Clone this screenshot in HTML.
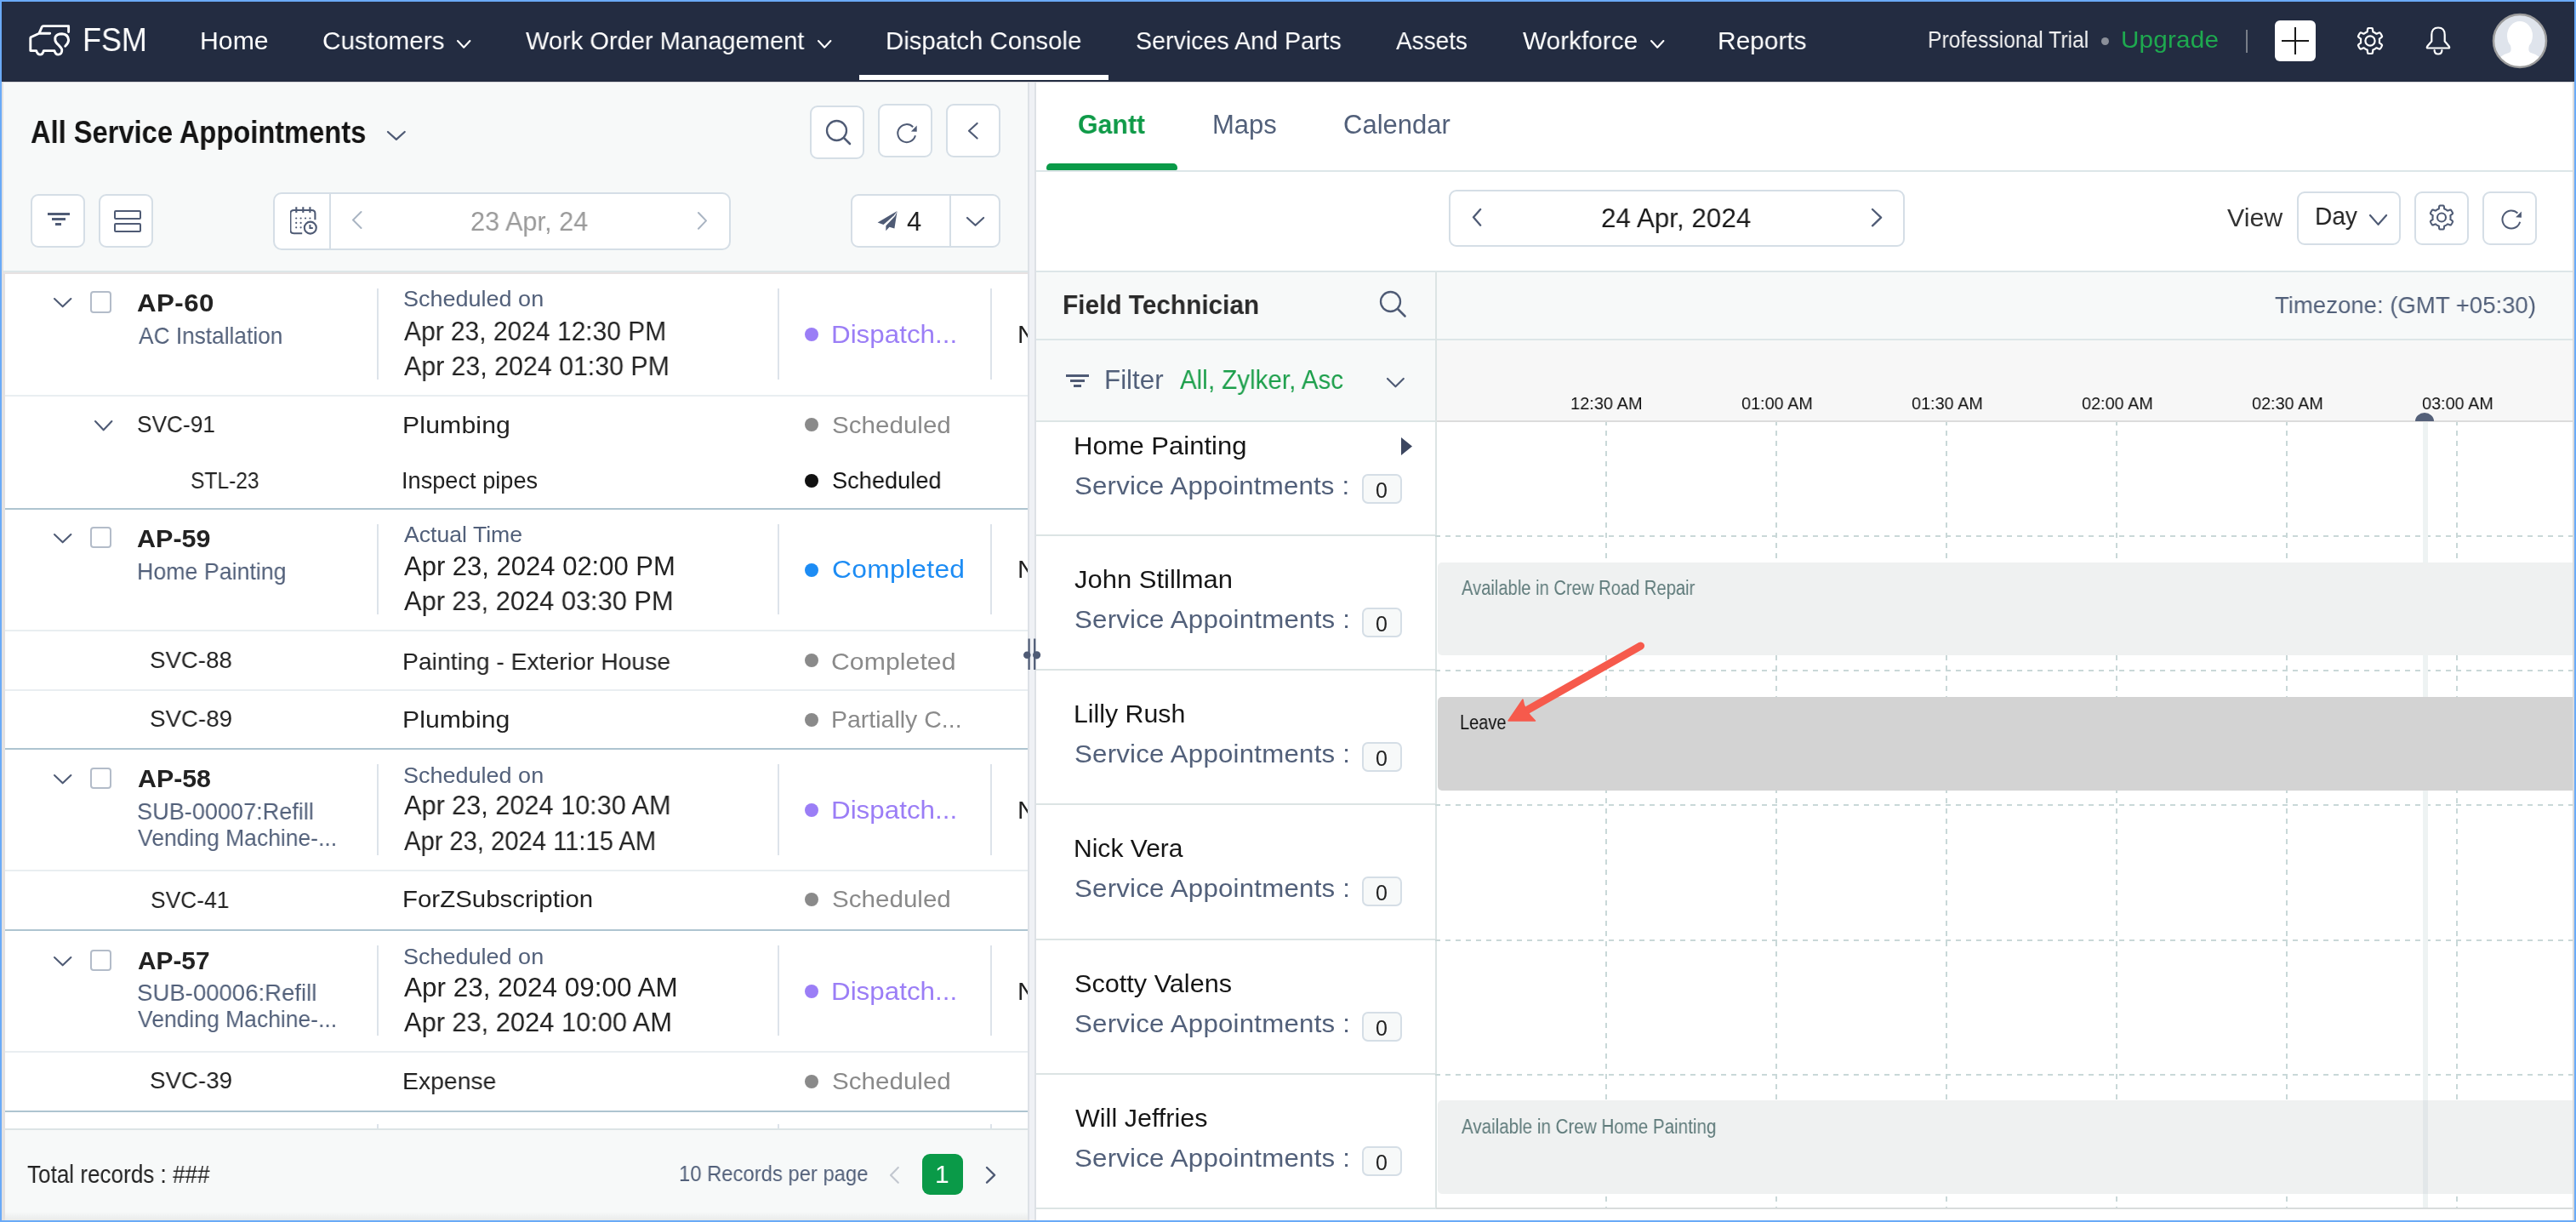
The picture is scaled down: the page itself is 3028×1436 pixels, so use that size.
<!DOCTYPE html><html><head><meta charset="utf-8"><title>FSM Dispatch Console</title><style>
*{margin:0;padding:0}
html,body{width:3028px;height:1436px;overflow:hidden;background:#6aaaf7;font-family:"Liberation Sans",sans-serif}
.a{position:absolute}
.t{position:absolute;white-space:nowrap;line-height:1;will-change:transform}
</style></head><body><div class="a" style="left:2px;top:2px;width:3024px;height:1432px;background:#ffffff;"></div>
<div class="a" style="left:2px;top:2px;width:3024px;height:94px;background:#232c41;"></div>
<div class="a" style="left:2px;top:96px;width:3024px;height:1px;background:#d9d9dc;"></div>
<div class="a" style="left:2px;top:97px;width:1206px;height:1337px;background:#f7f9f9;"></div>
<div class="a" style="left:2px;top:97px;width:2px;height:221px;background:#e2e1e1;"></div>
<div class="a" style="left:2px;top:318px;width:4px;height:1116px;background:#e3e1e1;"></div>
<div class="a" style="left:4px;top:318px;width:1204px;height:2px;background:#dde6e8;"></div>
<div class="a" style="left:4px;top:320px;width:1204px;height:2px;background:#e7e2e2;"></div>
<div class="a" style="left:6px;top:322px;width:1202px;height:1004px;background:#ffffff;"></div>
<div class="a" style="left:6px;top:464px;width:1202px;height:2px;background:#e9eef1;"></div>
<div class="a" style="left:6px;top:597px;width:1202px;height:2px;background:#aec4d0;"></div>
<div class="a" style="left:6px;top:740px;width:1202px;height:2px;background:#e9eef1;"></div>
<div class="a" style="left:6px;top:810px;width:1202px;height:2px;background:#e9eef1;"></div>
<div class="a" style="left:6px;top:879px;width:1202px;height:2px;background:#aec4d0;"></div>
<div class="a" style="left:6px;top:1022px;width:1202px;height:2px;background:#e9eef1;"></div>
<div class="a" style="left:6px;top:1092px;width:1202px;height:2px;background:#aec4d0;"></div>
<div class="a" style="left:6px;top:1235px;width:1202px;height:2px;background:#e9eef1;"></div>
<div class="a" style="left:6px;top:1305px;width:1202px;height:2px;background:#aec4d0;"></div>
<div class="a" style="left:6px;top:1326px;width:1202px;height:2px;background:#dce4e6;"></div>
<div class="a" style="left:6px;top:1424px;width:1202px;height:10px;background:linear-gradient(180deg,rgba(0,0,0,0),rgba(0,0,0,0.06))"></div>
<div class="a" style="left:1218px;top:1421px;width:1806px;height:13px;background:linear-gradient(180deg,rgba(0,0,0,0),rgba(0,0,0,0.05))"></div>
<div class="a" style="left:1208px;top:97px;width:10px;height:1337px;background:#eff1f5;"></div>
<div class="a" style="left:1208px;top:97px;width:2px;height:1337px;background:#dde1e6;"></div>
<div class="a" style="left:1216px;top:97px;width:2px;height:1337px;background:#dde1e6;"></div>
<div class="a" style="left:1218px;top:97px;width:1806px;height:1337px;background:#ffffff;"></div>
<div class="a" style="left:3024px;top:97px;width:2px;height:1337px;background:#dcdcdc;"></div>
<div class="a" style="left:1218px;top:200px;width:1806px;height:2px;background:#dde6e8;"></div>
<div class="a" style="left:1218px;top:318px;width:1806px;height:2px;background:#dde6e8;"></div>
<div class="a" style="left:1218px;top:320px;width:1806px;height:78px;background:#f7f9f9;"></div>
<div class="a" style="left:1218px;top:398px;width:1806px;height:2px;background:#dde6e8;"></div>
<div class="a" style="left:1218px;top:400px;width:470px;height:94px;background:#f7f9f9;"></div>
<div class="a" style="left:1689px;top:400px;width:1335px;height:94px;background:#f7f7f7;"></div>
<div class="a" style="left:1218px;top:494px;width:470px;height:2px;background:#dde5e5;"></div>
<div class="a" style="left:1688px;top:494px;width:1336px;height:2px;background:#dcdcdc;"></div>
<div class="a" style="left:1687px;top:320px;width:2px;height:1100px;background:#dce4e4;"></div>
<div class="a" style="left:1218px;top:628px;width:469px;height:2px;background:#dce4e4;"></div>
<div class="a" style="left:1218px;top:786px;width:469px;height:2px;background:#dce4e4;"></div>
<div class="a" style="left:1218px;top:944px;width:469px;height:2px;background:#dce4e4;"></div>
<div class="a" style="left:1218px;top:1103px;width:469px;height:2px;background:#dce4e4;"></div>
<div class="a" style="left:1218px;top:1261px;width:469px;height:2px;background:#dce4e4;"></div>
<div class="a" style="left:1218px;top:1419px;width:470px;height:2px;background:#dce4e4;"></div>
<div class="a" style="left:1688px;top:1419px;width:1336px;height:2px;background:#d8dcdc;"></div>
<div class="a" style="left:1687px;top:629px;width:1337px;height:2px;background:repeating-linear-gradient(90deg,#c9d8d8 0 6px,transparent 6px 12px)"></div>
<div class="a" style="left:1687px;top:787px;width:1337px;height:2px;background:repeating-linear-gradient(90deg,#c9d8d8 0 6px,transparent 6px 12px)"></div>
<div class="a" style="left:1687px;top:945px;width:1337px;height:2px;background:repeating-linear-gradient(90deg,#c9d8d8 0 6px,transparent 6px 12px)"></div>
<div class="a" style="left:1687px;top:1104px;width:1337px;height:2px;background:repeating-linear-gradient(90deg,#c9d8d8 0 6px,transparent 6px 12px)"></div>
<div class="a" style="left:1687px;top:1262px;width:1337px;height:2px;background:repeating-linear-gradient(90deg,#c9d8d8 0 6px,transparent 6px 12px)"></div>
<div class="a" style="left:1887px;top:496px;width:2px;height:923px;background:repeating-linear-gradient(180deg,#c9d8d8 0 4px,transparent 4px 10px,#c9d8d8 10px 12px)"></div>
<div class="a" style="left:2087px;top:496px;width:2px;height:923px;background:repeating-linear-gradient(180deg,#c9d8d8 0 4px,transparent 4px 10px,#c9d8d8 10px 12px)"></div>
<div class="a" style="left:2287px;top:496px;width:2px;height:923px;background:repeating-linear-gradient(180deg,#c9d8d8 0 4px,transparent 4px 10px,#c9d8d8 10px 12px)"></div>
<div class="a" style="left:2487px;top:496px;width:2px;height:923px;background:repeating-linear-gradient(180deg,#c9d8d8 0 4px,transparent 4px 10px,#c9d8d8 10px 12px)"></div>
<div class="a" style="left:2687px;top:496px;width:2px;height:923px;background:repeating-linear-gradient(180deg,#c9d8d8 0 4px,transparent 4px 10px,#c9d8d8 10px 12px)"></div>
<div class="a" style="left:2887px;top:496px;width:2px;height:923px;background:repeating-linear-gradient(180deg,#c9d8d8 0 4px,transparent 4px 10px,#c9d8d8 10px 12px)"></div>
<div class="a" style="left:2848px;top:496px;width:6px;height:923px;background:#eef3f3;"></div>
<div class="a" style="left:1690px;top:661px;width:1334px;height:109px;background:#eff1f1;border-radius:5px 0 0 5px;"></div>
<div class="a" style="left:1690px;top:819px;width:1334px;height:110px;background:#d3d3d3;border-radius:5px 0 0 5px;"></div>
<div class="a" style="left:1690px;top:1293px;width:1334px;height:110px;background:#eff1f1;border-radius:5px 0 0 5px;"></div>
<div class="a" style="left:2848px;top:1293px;width:6px;height:110px;background:#e2e7e9;"></div>
<svg class="a" style="left:2839px;top:485px;" width="22" height="10" viewBox="0 0 22 10"><path d="M0 10 A11 10 0 0 1 22 10 Z" fill="#546079"/></svg>
<svg class="a" style="left:28px;top:22px;" width="62" height="50" viewBox="0 0 62 50"><path d="M52.6 15.5 L52.6 8.6 L23 8.6 Q21.7 8.6 21.2 9.8 L18 17.2 L30.7 17.2 M18 17.2 L8.2 21.8 Q7.8 22.2 7.8 23 L7.8 37.6 L14.7 37.6 Q16 42.1 19.2 42.1 Q22.3 42.1 23.3 37.6 L36 37.6 Q37.2 42.1 40.3 42.1 Q45 42.1 44.8 36.4 Q44.6 34.4 38.5 28.6 Q36 25.4 37 21.5 Q38.6 18 44.9 17.8 Q52 18.2 52.6 25 Q52.6 28.6 48.7 32.3" fill="none" stroke="#fff" stroke-width="2.9" stroke-linecap="round" stroke-linejoin="round"/></svg>
<svg class="a" style="left:533.8px;top:43.54px;" width="22.4" height="15.72" viewBox="0 0 22.4 15.72"><path d="M4 4 L11.2 11.72 L18.4 4" fill="none" stroke="#ffffff" stroke-width="2.1" stroke-linecap="round" stroke-linejoin="round"/></svg>
<svg class="a" style="left:958.3px;top:43.54px;" width="22.4" height="15.72" viewBox="0 0 22.4 15.72"><path d="M4 4 L11.2 11.72 L18.4 4" fill="none" stroke="#ffffff" stroke-width="2.1" stroke-linecap="round" stroke-linejoin="round"/></svg>
<svg class="a" style="left:1936.8px;top:43.54px;" width="22.4" height="15.72" viewBox="0 0 22.4 15.72"><path d="M4 4 L11.2 11.72 L18.4 4" fill="none" stroke="#ffffff" stroke-width="2.1" stroke-linecap="round" stroke-linejoin="round"/></svg>
<div class="a" style="left:1010px;top:88px;width:293px;height:6px;background:#ffffff;"></div>
<div class="a" style="left:2470px;top:44px;width:9px;height:9px;border-radius:50%;background:#8a8f99"></div>
<div class="a" style="left:2640px;top:35px;width:2px;height:27px;background:#777d88;"></div>
<div class="a" style="left:2674px;top:24px;width:48px;height:48px;background:#ffffff;border-radius:6px;"></div>
<div class="a" style="left:2682px;top:47px;width:32px;height:2px;background:#1a1a1a;"></div>
<div class="a" style="left:2697px;top:32px;width:2px;height:32px;background:#1a1a1a;"></div>
<svg class="a" style="left:2766px;top:28px;" width="40" height="40" viewBox="0 0 40 40"><path d="M31.00 20.00 L30.99 20.48 L30.96 20.96 L30.91 21.44 L30.83 21.91 L30.90 22.42 L31.99 23.21 L33.37 24.22 L34.07 25.12 L33.86 25.74 L33.59 26.34 L33.31 26.93 L32.99 27.50 L32.65 28.06 L32.29 28.60 L31.90 29.13 L31.47 29.63 L30.34 29.47 L28.77 28.77 L27.54 28.23 L27.07 28.43 L26.70 28.73 L26.31 29.01 L25.91 29.28 L25.50 29.53 L25.08 29.76 L24.65 29.97 L24.21 30.16 L23.76 30.34 L23.36 30.65 L23.21 31.99 L23.03 33.69 L22.60 34.75 L21.96 34.87 L21.31 34.94 L20.65 34.99 L20.00 35.00 L19.35 34.99 L18.69 34.94 L18.04 34.87 L17.40 34.75 L16.97 33.69 L16.79 31.99 L16.64 30.65 L16.24 30.34 L15.79 30.16 L15.35 29.97 L14.92 29.76 L14.50 29.53 L14.09 29.28 L13.69 29.01 L13.30 28.73 L12.93 28.43 L12.46 28.23 L11.23 28.77 L9.66 29.47 L8.53 29.63 L8.10 29.13 L7.71 28.60 L7.35 28.06 L7.01 27.50 L6.69 26.93 L6.41 26.34 L6.14 25.74 L5.93 25.12 L6.63 24.22 L8.01 23.21 L9.10 22.42 L9.17 21.91 L9.09 21.44 L9.04 20.96 L9.01 20.48 L9.00 20.00 L9.01 19.52 L9.04 19.04 L9.09 18.56 L9.17 18.09 L9.10 17.58 L8.01 16.79 L6.63 15.78 L5.93 14.88 L6.14 14.26 L6.41 13.66 L6.69 13.07 L7.01 12.50 L7.35 11.94 L7.71 11.40 L8.10 10.87 L8.53 10.37 L9.66 10.53 L11.23 11.23 L12.46 11.77 L12.93 11.57 L13.30 11.27 L13.69 10.99 L14.09 10.72 L14.50 10.47 L14.92 10.24 L15.35 10.03 L15.79 9.84 L16.24 9.66 L16.64 9.35 L16.79 8.01 L16.97 6.31 L17.40 5.25 L18.04 5.13 L18.69 5.06 L19.35 5.01 L20.00 5.00 L20.65 5.01 L21.31 5.06 L21.96 5.13 L22.60 5.25 L23.03 6.31 L23.21 8.01 L23.36 9.35 L23.76 9.66 L24.21 9.84 L24.65 10.03 L25.08 10.24 L25.50 10.47 L25.91 10.72 L26.31 10.99 L26.70 11.27 L27.07 11.57 L27.54 11.77 L28.77 11.23 L30.34 10.53 L31.47 10.37 L31.90 10.87 L32.29 11.40 L32.65 11.94 L32.99 12.50 L33.31 13.07 L33.59 13.66 L33.86 14.26 L34.07 14.88 L33.37 15.78 L31.99 16.79 L30.90 17.58 L30.83 18.09 L30.91 18.56 L30.96 19.04 L30.99 19.52 Z" fill="none" stroke="#fff" stroke-width="2.2" stroke-linejoin="round"/><circle cx="20" cy="20" r="5.6" fill="none" stroke="#fff" stroke-width="2.2"/></svg>
<svg class="a" style="left:2848px;top:28px;" width="36" height="40" viewBox="0 0 36 40"><path d="M6 28.5 Q4 28.5 5.2 26.5 L10.3 20.5 L10.3 13 Q10.3 4.5 18 4.5 Q25.7 4.5 25.7 13 L25.7 20.5 L30.8 26.5 Q32 28.5 30 28.5 Z" fill="none" stroke="#fff" stroke-width="2.2" stroke-linejoin="round"/><path d="M13.6 31 Q13.6 35.5 18 35.5 Q22.4 35.5 22.4 31" fill="none" stroke="#fff" stroke-width="2.2" stroke-linecap="round"/></svg>
<svg class="a" style="left:2929px;top:15px;" width="66" height="66" viewBox="0 0 66 66"><defs><clipPath id="avc"><circle cx="33" cy="33" r="31"/></clipPath></defs><circle cx="33" cy="33" r="31" fill="#dfe4ec"/><g clip-path="url(#avc)"><ellipse cx="33" cy="27" rx="15" ry="17" fill="#fff"/><path d="M22 38 Q24 46 20 47 Q8 50 6 60 L6 70 L60 70 L60 60 Q58 50 46 47 Q42 46 44 38 Z" fill="#fff"/></g><circle cx="33" cy="33" r="31" fill="none" stroke="#9c9c9c" stroke-width="2.5"/></svg>
<svg class="a" style="left:452.15px;top:150.57px;" width="27.7" height="16.86" viewBox="0 0 27.7 16.86"><path d="M4 4 L13.85 12.86 L23.7 4" fill="none" stroke="#4f5b75" stroke-width="2.3" stroke-linecap="round" stroke-linejoin="round"/></svg>
<div class="a" style="left:952px;top:124px;width:64px;height:63px;background:#fff;border:2px solid #d5dee6;box-sizing:border-box;border-radius:9px;"></div>
<div class="a" style="left:1032px;top:122px;width:64px;height:63px;background:#fff;border:2px solid #d5dee6;box-sizing:border-box;border-radius:9px;"></div>
<div class="a" style="left:1112px;top:122px;width:64px;height:63px;background:#fff;border:2px solid #d5dee6;box-sizing:border-box;border-radius:9px;"></div>
<svg class="a" style="left:969.5px;top:139.5px;" width="36" height="36" viewBox="0 0 36 36"><circle cx="13.5" cy="13.5" r="11.5" fill="none" stroke="#4f5b75" stroke-width="2.3"/><path d="M21.8 21.8 L29 29" stroke="#4f5b75" stroke-width="2.6" stroke-linecap="round"/></svg>
<svg class="a" style="left:1053px;top:140.5px;" width="30" height="30" viewBox="0 0 30 30"><path d="M22.94 18.32 A10.5 10.5 0 1 1 20.22 8.18" fill="none" stroke="#4f5b75" stroke-width="2"/><path d="M24.7 6.6 L24.7 13.8 L17.9 13.4 Z" fill="#4f5b75"/></svg>
<svg class="a" style="left:1135.3px;top:141.0px;" width="17.600000000000136" height="25.5" viewBox="0 0 17.600000000000136 25.5"><path d="M13.600000000000136 4 L4 12.75 L13.600000000000136 21.5" fill="none" stroke="#4f5b75" stroke-width="2.2" stroke-linecap="round" stroke-linejoin="round"/></svg>
<div class="a" style="left:36px;top:228px;width:64px;height:63px;background:#fff;border:2px solid #d5dee6;box-sizing:border-box;border-radius:9px;"></div>
<div class="a" style="left:116px;top:228px;width:64px;height:63px;background:#fff;border:2px solid #d5dee6;box-sizing:border-box;border-radius:9px;"></div>
<div class="a" style="left:56px;top:250px;width:26px;height:3px;background:#4f5b75;"></div>
<div class="a" style="left:61px;top:256px;width:16px;height:3px;background:#4f5b75;"></div>
<div class="a" style="left:65px;top:262px;width:7px;height:3px;background:#4f5b75;"></div>
<div class="a" style="left:134px;top:247px;width:32px;height:11px;border:2.2px solid #4f5b75;border-radius:2px;box-sizing:border-box"></div>
<div class="a" style="left:134px;top:262px;width:32px;height:11px;border:2.2px solid #4f5b75;border-radius:2px;box-sizing:border-box"></div>
<div class="a" style="left:321px;top:226px;width:538px;height:68px;background:#fff;border:2px solid #d5dee6;box-sizing:border-box;border-radius:10px;"></div>
<div class="a" style="left:387px;top:228px;width:2px;height:64px;background:#d5dee6;"></div>
<svg class="a" style="left:341px;top:241px;" width="34" height="38" viewBox="0 0 34 38"><path d="M14.2 33.3 L4.5 33.3 Q0.4 33.3 0.4 29.2 L0.4 9.8 Q0.4 6 4.5 6 L25.3 6 Q29.4 6 29.4 9.8 L29.4 17.3" fill="none" stroke="#4f5b75" stroke-width="2.1"/><path d="M7.3 2.2 L7.3 8.9" stroke="#4f5b75" stroke-width="2.1"/><path d="M15.3 2.2 L15.3 8.9" stroke="#4f5b75" stroke-width="2.1"/><path d="M23.4 2.2 L23.4 8.9" stroke="#4f5b75" stroke-width="2.1"/><circle cx="7.2" cy="15.5" r="1.1" fill="#4f5b75"/><circle cx="12.6" cy="15.5" r="1.1" fill="#4f5b75"/><circle cx="18" cy="15.5" r="1.1" fill="#4f5b75"/><circle cx="23.4" cy="15.5" r="1.1" fill="#4f5b75"/><circle cx="7.2" cy="20.9" r="1.1" fill="#4f5b75"/><circle cx="12.6" cy="20.9" r="1.1" fill="#4f5b75"/><circle cx="7.2" cy="26.3" r="1.1" fill="#4f5b75"/><circle cx="12.6" cy="26.3" r="1.1" fill="#4f5b75"/><circle cx="23.8" cy="26.6" r="7" fill="#fff" stroke="#4f5b75" stroke-width="2.1"/><path d="M23.4 23 L23.4 27 L26.8 27" fill="none" stroke="#4f5b75" stroke-width="2"/></svg>
<svg class="a" style="left:411.0px;top:245.0px;" width="17.5" height="27.0" viewBox="0 0 17.5 27.0"><path d="M13.5 4 L4 13.5 L13.5 23.0" fill="none" stroke="#a9b4c2" stroke-width="2" stroke-linecap="round" stroke-linejoin="round"/></svg>
<svg class="a" style="left:817.0px;top:245.5px;" width="17.0" height="26.80000000000001" viewBox="0 0 17.0 26.80000000000001"><path d="M4 4 L13.0 13.400000000000006 L4 22.80000000000001" fill="none" stroke="#a9b4c2" stroke-width="2" stroke-linecap="round" stroke-linejoin="round"/></svg>
<div class="a" style="left:1000px;top:228px;width:176px;height:63px;background:#fff;border:2px solid #d5dee6;box-sizing:border-box;border-radius:9px;"></div>
<div class="a" style="left:1116px;top:230px;width:2px;height:59px;background:#d5dee6;"></div>
<svg class="a" style="left:1030px;top:247px;" width="26" height="26" viewBox="0 0 26 26"><path d="M24.6 1 L1.6 14.4 L8.5 16.9 L20.8 6.3 Z" fill="#4f5b75"/><path d="M24.6 1.3 L21.4 21.6 L15.5 19.8 L11.3 24.2 L11.4 18.2 L22.2 6.8 Z" fill="#4f5b75"/></svg>
<svg class="a" style="left:1132.75px;top:252.13px;" width="27.1" height="16.740000000000002" viewBox="0 0 27.1 16.740000000000002"><path d="M4 4 L13.55 12.74 L23.1 4" fill="none" stroke="#4f5b75" stroke-width="2.2" stroke-linecap="round" stroke-linejoin="round"/></svg>
<svg class="a" style="left:59.599999999999994px;top:347.14px;" width="27.4" height="17.32" viewBox="0 0 27.4 17.32"><path d="M4 4 L13.7 13.32 L23.4 4" fill="none" stroke="#4f5b75" stroke-width="2.1" stroke-linecap="round" stroke-linejoin="round"/></svg>
<div class="a" style="left:106px;top:342.2px;width:25px;height:25.6px;border:2px solid #b3bcc9;border-radius:4px;box-sizing:border-box;background:#fff"></div>
<div class="a" style="left:443px;top:338.7px;width:2px;height:107.60000000000002px;background:#dde3ea;"></div>
<div class="a" style="left:914px;top:338.7px;width:2px;height:107.60000000000002px;background:#dde3ea;"></div>
<div class="a" style="left:1164px;top:338.7px;width:2px;height:107.60000000000002px;background:#dde3ea;"></div>
<div class="a" style="left:946px;top:385.0px;width:16px;height:16px;border-radius:50%;background:#9b7ef6"></div>
<div class="a" style="left:1190px;top:373.0px;width:18px;height:40px;overflow:hidden"><div class="t" style="left:5.5px;top:4.61px;font-size:30px;color:#222">N</div></div>
<svg class="a" style="left:59.599999999999994px;top:623.64px;" width="27.4" height="17.32" viewBox="0 0 27.4 17.32"><path d="M4 4 L13.7 13.32 L23.4 4" fill="none" stroke="#4f5b75" stroke-width="2.1" stroke-linecap="round" stroke-linejoin="round"/></svg>
<div class="a" style="left:106px;top:618.7px;width:25px;height:25.6px;border:2px solid #b3bcc9;border-radius:4px;box-sizing:border-box;background:#fff"></div>
<div class="a" style="left:443px;top:615.7px;width:2px;height:106.79999999999995px;background:#dde3ea;"></div>
<div class="a" style="left:914px;top:615.7px;width:2px;height:106.79999999999995px;background:#dde3ea;"></div>
<div class="a" style="left:1164px;top:615.7px;width:2px;height:106.79999999999995px;background:#dde3ea;"></div>
<div class="a" style="left:946px;top:662.0px;width:16px;height:16px;border-radius:50%;background:#1d8cf4"></div>
<div class="a" style="left:1190px;top:649.5px;width:18px;height:40px;overflow:hidden"><div class="t" style="left:5.5px;top:4.61px;font-size:30px;color:#222">N</div></div>
<svg class="a" style="left:59.599999999999994px;top:906.64px;" width="27.4" height="17.32" viewBox="0 0 27.4 17.32"><path d="M4 4 L13.7 13.32 L23.4 4" fill="none" stroke="#4f5b75" stroke-width="2.1" stroke-linecap="round" stroke-linejoin="round"/></svg>
<div class="a" style="left:106px;top:901.7px;width:25px;height:25.6px;border:2px solid #b3bcc9;border-radius:4px;box-sizing:border-box;background:#fff"></div>
<div class="a" style="left:443px;top:898px;width:2px;height:107px;background:#dde3ea;"></div>
<div class="a" style="left:914px;top:898px;width:2px;height:107px;background:#dde3ea;"></div>
<div class="a" style="left:1164px;top:898px;width:2px;height:107px;background:#dde3ea;"></div>
<div class="a" style="left:946px;top:944.0px;width:16px;height:16px;border-radius:50%;background:#9b7ef6"></div>
<div class="a" style="left:1190px;top:932.5px;width:18px;height:40px;overflow:hidden"><div class="t" style="left:5.5px;top:4.61px;font-size:30px;color:#222">N</div></div>
<svg class="a" style="left:59.599999999999994px;top:1120.6399999999999px;" width="27.4" height="17.32" viewBox="0 0 27.4 17.32"><path d="M4 4 L13.7 13.32 L23.4 4" fill="none" stroke="#4f5b75" stroke-width="2.1" stroke-linecap="round" stroke-linejoin="round"/></svg>
<div class="a" style="left:106px;top:1115.7px;width:25px;height:25.6px;border:2px solid #b3bcc9;border-radius:4px;box-sizing:border-box;background:#fff"></div>
<div class="a" style="left:443px;top:1111px;width:2px;height:106px;background:#dde3ea;"></div>
<div class="a" style="left:914px;top:1111px;width:2px;height:106px;background:#dde3ea;"></div>
<div class="a" style="left:1164px;top:1111px;width:2px;height:106px;background:#dde3ea;"></div>
<div class="a" style="left:946px;top:1157.0px;width:16px;height:16px;border-radius:50%;background:#9b7ef6"></div>
<div class="a" style="left:1190px;top:1145.5px;width:18px;height:40px;overflow:hidden"><div class="t" style="left:5.5px;top:4.61px;font-size:30px;color:#222">N</div></div>
<svg class="a" style="left:107.5px;top:490.84px;" width="27.4" height="18.32" viewBox="0 0 27.4 18.32"><path d="M4 4 L13.7 14.32 L23.4 4" fill="none" stroke="#4f5b75" stroke-width="2.1" stroke-linecap="round" stroke-linejoin="round"/></svg>
<div class="a" style="left:946px;top:491.0px;width:16px;height:16px;border-radius:50%;background:#8a8a8a"></div>
<div class="a" style="left:946px;top:557.0px;width:16px;height:16px;border-radius:50%;background:#111"></div>
<div class="a" style="left:946px;top:768.0px;width:16px;height:16px;border-radius:50%;background:#8a8a8a"></div>
<div class="a" style="left:946px;top:837.5px;width:16px;height:16px;border-radius:50%;background:#8a8a8a"></div>
<div class="a" style="left:946px;top:1049.0px;width:16px;height:16px;border-radius:50%;background:#8a8a8a"></div>
<div class="a" style="left:946px;top:1262.5px;width:16px;height:16px;border-radius:50%;background:#8a8a8a"></div>
<div class="a" style="left:443px;top:1321px;width:2px;height:5px;background:#dde3ea;"></div>
<div class="a" style="left:914px;top:1321px;width:2px;height:5px;background:#dde3ea;"></div>
<div class="a" style="left:1164px;top:1321px;width:2px;height:5px;background:#dde3ea;"></div>
<svg class="a" style="left:1043.1px;top:1368.1px;" width="16.800000000000182" height="25.800000000000182" viewBox="0 0 16.800000000000182 25.800000000000182"><path d="M12.800000000000182 4 L4 12.900000000000091 L12.800000000000182 21.800000000000182" fill="none" stroke="#c3c8d0" stroke-width="2.2" stroke-linecap="round" stroke-linejoin="round"/></svg>
<div class="a" style="left:1084px;top:1356px;width:48px;height:48px;background:#0a9a48;border-radius:9px;"></div>
<div class="t" style="left:1099.25px;top:1364.61px;font-size:30px;color:#ffffff;">1</div>
<svg class="a" style="left:1156.2px;top:1368.2px;" width="17.09999999999991" height="25.59999999999991" viewBox="0 0 17.09999999999991 25.59999999999991"><path d="M4 4 L13.099999999999909 12.799999999999955 L4 21.59999999999991" fill="none" stroke="#4f5b75" stroke-width="2.4" stroke-linecap="round" stroke-linejoin="round"/></svg>
<svg class="a" style="left:1200px;top:748px;" width="26" height="42" viewBox="0 0 26 42"><path d="M9.6 2.5 L9.6 39 M16.2 2.5 L16.2 39" stroke="#4f5b75" stroke-width="2.2"/><circle cx="7.3" cy="21.8" r="4.3" fill="#4f5b75"/><circle cx="18.6" cy="21.8" r="4.6" fill="#4f5b75"/></svg>
<div class="a" style="left:1230px;top:192px;width:154px;height:8px;background:#0a9a48;border-radius:5px 5px 2px 2px"></div>
<div class="a" style="left:1703px;top:223px;width:536px;height:67px;background:#fff;border:2px solid #d5dee6;box-sizing:border-box;border-radius:9px;"></div>
<svg class="a" style="left:1728.15px;top:241.65px;" width="16.199999999999818" height="26.700000000000017" viewBox="0 0 16.199999999999818 26.700000000000017"><path d="M12.199999999999818 4 L4 13.350000000000009 L12.199999999999818 22.700000000000017" fill="none" stroke="#4f5b75" stroke-width="2.3" stroke-linecap="round" stroke-linejoin="round"/></svg>
<svg class="a" style="left:2197.15px;top:242.15px;" width="18.09999999999991" height="27.30000000000004" viewBox="0 0 18.09999999999991 27.30000000000004"><path d="M4 4 L14.099999999999909 13.65000000000002 L4 23.30000000000004" fill="none" stroke="#4f5b75" stroke-width="2.3" stroke-linecap="round" stroke-linejoin="round"/></svg>
<div class="a" style="left:2700px;top:225px;width:122px;height:63px;background:#fff;border:2px solid #d5dee6;box-sizing:border-box;border-radius:9px;"></div>
<svg class="a" style="left:2782.45px;top:249.08px;" width="27.1" height="18.84" viewBox="0 0 27.1 18.84"><path d="M4 4 L13.55 14.84 L23.1 4" fill="none" stroke="#4f5b75" stroke-width="2.2" stroke-linecap="round" stroke-linejoin="round"/></svg>
<div class="a" style="left:2838px;top:225px;width:64px;height:63px;background:#fff;border:2px solid #d5dee6;box-sizing:border-box;border-radius:9px;"></div>
<div class="a" style="left:2918px;top:225px;width:64px;height:63px;background:#fff;border:2px solid #d5dee6;box-sizing:border-box;border-radius:9px;"></div>
<svg class="a" style="left:2850px;top:236px;" width="40" height="40" viewBox="0 0 40 40"><path d="M30.50 19.50 L30.49 19.96 L30.46 20.42 L30.41 20.87 L30.34 21.32 L30.39 21.80 L31.33 22.54 L32.54 23.45 L33.14 24.28 L32.93 24.86 L32.69 25.42 L32.42 25.96 L32.12 26.50 L31.81 27.02 L31.47 27.53 L31.11 28.02 L30.71 28.49 L29.69 28.38 L28.30 27.80 L27.19 27.35 L26.75 27.54 L26.39 27.83 L26.02 28.10 L25.64 28.36 L25.25 28.59 L24.85 28.81 L24.44 29.02 L24.02 29.20 L23.59 29.37 L23.20 29.65 L23.04 30.83 L22.84 32.33 L22.43 33.27 L21.83 33.38 L21.22 33.45 L20.61 33.49 L20.00 33.50 L19.39 33.49 L18.78 33.45 L18.17 33.38 L17.57 33.27 L17.16 32.33 L16.96 30.83 L16.80 29.65 L16.41 29.37 L15.98 29.20 L15.56 29.02 L15.15 28.81 L14.75 28.59 L14.36 28.36 L13.98 28.10 L13.61 27.83 L13.25 27.54 L12.81 27.35 L11.70 27.80 L10.31 28.38 L9.29 28.49 L8.89 28.02 L8.53 27.53 L8.19 27.02 L7.88 26.50 L7.58 25.96 L7.31 25.42 L7.07 24.86 L6.86 24.28 L7.46 23.45 L8.67 22.54 L9.61 21.80 L9.66 21.32 L9.59 20.87 L9.54 20.42 L9.51 19.96 L9.50 19.50 L9.51 19.04 L9.54 18.58 L9.59 18.13 L9.66 17.68 L9.61 17.20 L8.67 16.46 L7.46 15.55 L6.86 14.72 L7.07 14.14 L7.31 13.58 L7.58 13.04 L7.88 12.50 L8.19 11.98 L8.53 11.47 L8.89 10.98 L9.29 10.51 L10.31 10.62 L11.70 11.20 L12.81 11.65 L13.25 11.46 L13.61 11.17 L13.98 10.90 L14.36 10.64 L14.75 10.41 L15.15 10.19 L15.56 9.98 L15.98 9.80 L16.41 9.63 L16.80 9.35 L16.96 8.17 L17.16 6.67 L17.57 5.73 L18.17 5.62 L18.78 5.55 L19.39 5.51 L20.00 5.50 L20.61 5.51 L21.22 5.55 L21.83 5.62 L22.43 5.73 L22.84 6.67 L23.04 8.17 L23.20 9.35 L23.59 9.63 L24.02 9.80 L24.44 9.98 L24.85 10.19 L25.25 10.41 L25.64 10.64 L26.02 10.90 L26.39 11.17 L26.75 11.46 L27.19 11.65 L28.30 11.20 L29.69 10.62 L30.71 10.51 L31.11 10.98 L31.47 11.47 L31.81 11.98 L32.12 12.50 L32.42 13.04 L32.69 13.58 L32.93 14.14 L33.14 14.72 L32.54 15.55 L31.33 16.46 L30.39 17.20 L30.34 17.68 L30.41 18.13 L30.46 18.58 L30.49 19.04 Z" fill="none" stroke="#4f5b75" stroke-width="2.1" stroke-linejoin="round"/><circle cx="20" cy="19.5" r="5" fill="none" stroke="#4f5b75" stroke-width="2.1"/></svg>
<svg class="a" style="left:2937px;top:241.3px;" width="32" height="32" viewBox="0 0 32 32"><path d="M25.14 19.72 A10.5 10.5 0 1 1 22.42 9.58" fill="none" stroke="#4f5b75" stroke-width="2"/><path d="M26.9 7.5 L26.9 14.7 L20.1 14.3 Z" fill="#4f5b75"/></svg>
<svg class="a" style="left:1620px;top:340px;" width="38" height="38" viewBox="0 0 38 38"><circle cx="14.5" cy="14.5" r="11.5" fill="none" stroke="#4f5b75" stroke-width="2.3"/><path d="M23 23 L31.5 31.5" stroke="#4f5b75" stroke-width="2.6" stroke-linecap="round"/></svg>
<div class="a" style="left:1253px;top:440px;width:27px;height:3px;background:#4f5b75;"></div>
<div class="a" style="left:1258px;top:446px;width:17px;height:3px;background:#4f5b75;"></div>
<div class="a" style="left:1262px;top:452px;width:9px;height:3px;background:#4f5b75;"></div>
<svg class="a" style="left:1626.6px;top:441.38px;" width="26.8" height="17.240000000000002" viewBox="0 0 26.8 17.240000000000002"><path d="M4 4 L13.4 13.24 L22.8 4" fill="none" stroke="#4f5b75" stroke-width="2.2" stroke-linecap="round" stroke-linejoin="round"/></svg>
<svg class="a" style="left:1646px;top:513px;" width="16" height="23" viewBox="0 0 16 23"><path d="M1 1 L14 11.5 L1 22 Z" fill="#3c4660"/></svg>
<div class="a" style="left:1601px;top:557px;width:47px;height:35px;background:#f7f9f9;border:2px solid #d5dee6;box-sizing:border-box;border-radius:7px;"></div>
<div class="t" style="left:1616.50px;top:563.84px;font-size:25px;color:#222;">0</div>
<div class="a" style="left:1601px;top:714px;width:47px;height:35px;background:#f7f9f9;border:2px solid #d5dee6;box-sizing:border-box;border-radius:7px;"></div>
<div class="t" style="left:1616.50px;top:720.84px;font-size:25px;color:#222;">0</div>
<div class="a" style="left:1601px;top:872px;width:47px;height:35px;background:#f7f9f9;border:2px solid #d5dee6;box-sizing:border-box;border-radius:7px;"></div>
<div class="t" style="left:1616.50px;top:878.84px;font-size:25px;color:#222;">0</div>
<div class="a" style="left:1601px;top:1030px;width:47px;height:35px;background:#f7f9f9;border:2px solid #d5dee6;box-sizing:border-box;border-radius:7px;"></div>
<div class="t" style="left:1616.50px;top:1036.84px;font-size:25px;color:#222;">0</div>
<div class="a" style="left:1601px;top:1189px;width:47px;height:35px;background:#f7f9f9;border:2px solid #d5dee6;box-sizing:border-box;border-radius:7px;"></div>
<div class="t" style="left:1616.50px;top:1195.84px;font-size:25px;color:#222;">0</div>
<div class="a" style="left:1601px;top:1347px;width:47px;height:35px;background:#f7f9f9;border:2px solid #d5dee6;box-sizing:border-box;border-radius:7px;"></div>
<div class="t" style="left:1616.50px;top:1353.84px;font-size:25px;color:#222;">0</div>
<svg class="a" style="left:1760px;top:748px;" width="185" height="110" viewBox="0 0 185 110"><path d="M168.5 11 L36 86" stroke="#f65a4c" stroke-width="9" stroke-linecap="round"/><path d="M13 99 L30 74 Q31 86 44.5 99 Z" fill="#f65a4c" stroke="#f65a4c" stroke-width="1.5" stroke-linejoin="round"/></svg>
<div class="t" style="left:97.16px;top:28.03px;font-size:38px;color:#ffffff;transform:scaleX(0.9459);transform-origin:0 0;">FSM</div>
<div class="t" style="left:235.08px;top:33.11px;font-size:30px;color:#ffffff;transform:scaleX(1.0072);transform-origin:0 0;">Home</div>
<div class="t" style="left:378.52px;top:33.11px;font-size:30px;color:#ffffff;transform:scaleX(0.9895);transform-origin:0 0;">Customers</div>
<div class="t" style="left:618.40px;top:33.11px;font-size:30px;color:#ffffff;transform:scaleX(0.9688);transform-origin:0 0;">Work Order Management</div>
<div class="t" style="left:1041.05px;top:33.11px;font-size:30px;color:#ffffff;transform:scaleX(0.9797);transform-origin:0 0;">Dispatch Console</div>
<div class="t" style="left:1334.81px;top:33.11px;font-size:30px;color:#ffffff;transform:scaleX(0.9536);transform-origin:0 0;">Services And Parts</div>
<div class="t" style="left:1641.00px;top:33.11px;font-size:30px;color:#ffffff;transform:scaleX(0.9326);transform-origin:0 0;">Assets</div>
<div class="t" style="left:1789.70px;top:33.11px;font-size:30px;color:#ffffff;transform:scaleX(0.9926);transform-origin:0 0;">Workforce</div>
<div class="t" style="left:2018.51px;top:33.11px;font-size:30px;color:#ffffff;transform:scaleX(0.9951);transform-origin:0 0;">Reports</div>
<div class="t" style="left:2265.52px;top:32.90px;font-size:28px;color:#f2f2f2;transform:scaleX(0.8811);transform-origin:0 0;">Professional Trial</div>
<div class="t" style="left:2493.28px;top:32.90px;font-size:28px;color:#1ea94f;letter-spacing:0.172px;transform:scaleX(1.0600);transform-origin:0 0;">Upgrade</div>
<div class="t" style="left:36.02px;top:137.08px;font-size:37px;color:#141414;font-weight:700;transform:scaleX(0.8824);transform-origin:0 0;">All Service Appointments</div>
<div class="t" style="left:552.82px;top:245.16px;font-size:31px;color:#9a9a9a;transform:scaleX(0.9891);transform-origin:0 0;">23 Apr, 24</div>
<div class="t" style="left:1065.95px;top:244.66px;font-size:31px;color:#222;">4</div>
<div class="t" style="left:161.21px;top:341.03px;font-size:29.5px;color:#222222;font-weight:700;letter-spacing:0.435px;transform:scaleX(1.0600);transform-origin:0 0;">AP-60</div>
<div class="t" style="left:162.80px;top:381.30px;font-size:28px;color:#52607a;transform:scaleX(0.9376);transform-origin:0 0;">AC Installation</div>
<div class="t" style="left:473.70px;top:338.49px;font-size:26px;color:#52607a;transform:scaleX(1.0385);transform-origin:0 0;">Scheduled on</div>
<div class="t" style="left:475.00px;top:373.96px;font-size:31px;color:#222222;transform:scaleX(0.9666);transform-origin:0 0;">Apr 23, 2024 12:30 PM</div>
<div class="t" style="left:475.00px;top:414.56px;font-size:31px;color:#222222;transform:scaleX(0.9783);transform-origin:0 0;">Apr 23, 2024 01:30 PM</div>
<div class="t" style="left:977.39px;top:377.61px;font-size:30px;color:#9b7ef6;transform:scaleX(1.0457);transform-origin:0 0;">Dispatch...</div>
<div class="t" style="left:160.83px;top:485.20px;font-size:28px;color:#222222;transform:scaleX(0.9372);transform-origin:0 0;">SVC-91</div>
<div class="t" style="left:472.62px;top:484.87px;font-size:28.5px;color:#222222;letter-spacing:0.130px;transform:scaleX(1.0600);transform-origin:0 0;">Plumbing</div>
<div class="t" style="left:978.00px;top:484.87px;font-size:28.5px;color:#8a8a8a;transform:scaleX(1.0380);transform-origin:0 0;">Scheduled</div>
<div class="t" style="left:224.26px;top:551.64px;font-size:27px;color:#222222;transform:scaleX(0.9101);transform-origin:0 0;">STL-23</div>
<div class="t" style="left:472.48px;top:551.64px;font-size:27px;color:#222222;transform:scaleX(1.0064);transform-origin:0 0;">Inspect pipes</div>
<div class="t" style="left:978.06px;top:551.22px;font-size:27.5px;color:#111;transform:scaleX(0.9882);transform-origin:0 0;">Scheduled</div>
<div class="t" style="left:161.22px;top:617.63px;font-size:29.5px;color:#222222;font-weight:700;transform:scaleX(1.0341);transform-origin:0 0;">AP-59</div>
<div class="t" style="left:160.65px;top:658.30px;font-size:28px;color:#52607a;transform:scaleX(0.9560);transform-origin:0 0;">Home Painting</div>
<div class="t" style="left:475.00px;top:614.99px;font-size:26px;color:#52607a;transform:scaleX(1.0241);transform-origin:0 0;">Actual Time</div>
<div class="t" style="left:475.00px;top:650.26px;font-size:31px;color:#222222;">Apr 23, 2024 02:00 PM</div>
<div class="t" style="left:475.00px;top:690.76px;font-size:31px;color:#222222;transform:scaleX(0.9929);transform-origin:0 0;">Apr 23, 2024 03:30 PM</div>
<div class="t" style="left:978.41px;top:654.11px;font-size:30px;color:#1d8cf4;letter-spacing:0.265px;transform:scaleX(1.0600);transform-origin:0 0;">Completed</div>
<div class="t" style="left:176.47px;top:761.90px;font-size:28px;color:#222222;transform:scaleX(0.9869);transform-origin:0 0;">SVC-88</div>
<div class="t" style="left:473.16px;top:762.57px;font-size:28.5px;color:#222222;transform:scaleX(0.9946);transform-origin:0 0;">Painting - Exterior House</div>
<div class="t" style="left:977.21px;top:762.57px;font-size:28.5px;color:#8a8a8a;letter-spacing:0.051px;transform:scaleX(1.0600);transform-origin:0 0;">Completed</div>
<div class="t" style="left:176.46px;top:831.30px;font-size:28px;color:#222222;transform:scaleX(0.9895);transform-origin:0 0;">SVC-89</div>
<div class="t" style="left:472.62px;top:831.27px;font-size:28.5px;color:#222222;letter-spacing:0.049px;transform:scaleX(1.0600);transform-origin:0 0;">Plumbing</div>
<div class="t" style="left:976.55px;top:831.27px;font-size:28.5px;color:#8a8a8a;">Partially C...</div>
<div class="t" style="left:161.53px;top:900.03px;font-size:29.5px;color:#222222;font-weight:700;transform:scaleX(1.0280);transform-origin:0 0;">AP-58</div>
<div class="t" style="left:161.09px;top:940.10px;font-size:28px;color:#52607a;transform:scaleX(0.9681);transform-origin:0 0;">SUB-00007:Refill</div>
<div class="t" style="left:162.30px;top:971.30px;font-size:28px;color:#52607a;transform:scaleX(0.9457);transform-origin:0 0;">Vending Machine-...</div>
<div class="t" style="left:473.70px;top:898.29px;font-size:26px;color:#52607a;transform:scaleX(1.0385);transform-origin:0 0;">Scheduled on</div>
<div class="t" style="left:475.00px;top:931.36px;font-size:31px;color:#222222;transform:scaleX(0.9889);transform-origin:0 0;">Apr 23, 2024 10:30 AM</div>
<div class="t" style="left:475.00px;top:972.56px;font-size:31px;color:#222222;transform:scaleX(0.9406);transform-origin:0 0;">Apr 23, 2024 11:15 AM</div>
<div class="t" style="left:977.39px;top:937.11px;font-size:30px;color:#9b7ef6;transform:scaleX(1.0457);transform-origin:0 0;">Dispatch...</div>
<div class="t" style="left:176.52px;top:1043.80px;font-size:28px;color:#222222;transform:scaleX(0.9424);transform-origin:0 0;">SVC-41</div>
<div class="t" style="left:472.68px;top:1042.47px;font-size:28.5px;color:#222222;transform:scaleX(1.0329);transform-origin:0 0;">ForZSubscription</div>
<div class="t" style="left:977.50px;top:1042.47px;font-size:28.5px;color:#8a8a8a;transform:scaleX(1.0380);transform-origin:0 0;">Scheduled</div>
<div class="t" style="left:161.54px;top:1113.63px;font-size:29.5px;color:#222222;font-weight:700;transform:scaleX(1.0104);transform-origin:0 0;">AP-57</div>
<div class="t" style="left:161.07px;top:1153.10px;font-size:28px;color:#52607a;transform:scaleX(0.9842);transform-origin:0 0;">SUB-00006:Refill</div>
<div class="t" style="left:162.30px;top:1184.30px;font-size:28px;color:#52607a;transform:scaleX(0.9457);transform-origin:0 0;">Vending Machine-...</div>
<div class="t" style="left:473.70px;top:1110.99px;font-size:26px;color:#52607a;transform:scaleX(1.0385);transform-origin:0 0;">Scheduled on</div>
<div class="t" style="left:475.00px;top:1144.96px;font-size:31px;color:#222222;transform:scaleX(1.0143);transform-origin:0 0;">Apr 23, 2024 09:00 AM</div>
<div class="t" style="left:475.00px;top:1186.26px;font-size:31px;color:#222222;transform:scaleX(0.9933);transform-origin:0 0;">Apr 23, 2024 10:00 AM</div>
<div class="t" style="left:977.39px;top:1150.11px;font-size:30px;color:#9b7ef6;transform:scaleX(1.0457);transform-origin:0 0;">Dispatch...</div>
<div class="t" style="left:176.46px;top:1256.20px;font-size:28px;color:#222222;transform:scaleX(0.9895);transform-origin:0 0;">SVC-39</div>
<div class="t" style="left:472.76px;top:1256.17px;font-size:28.5px;color:#222222;transform:scaleX(0.9953);transform-origin:0 0;">Expense</div>
<div class="t" style="left:977.50px;top:1256.17px;font-size:28.5px;color:#8a8a8a;transform:scaleX(1.0380);transform-origin:0 0;">Scheduled</div>
<div class="t" style="left:32.05px;top:1366.45px;font-size:29px;color:#222222;transform:scaleX(0.8992);transform-origin:0 0;">Total records : ###</div>
<div class="t" style="left:798.13px;top:1366.71px;font-size:25.5px;color:#52607a;transform:scaleX(0.9340);transform-origin:0 0;">10 Records per page</div>
<div class="t" style="left:1267.08px;top:130.96px;font-size:31px;color:#0f9a48;font-weight:700;transform:scaleX(0.9779);transform-origin:0 0;">Gantt</div>
<div class="t" style="left:1424.50px;top:130.96px;font-size:31px;color:#52607a;">Maps</div>
<div class="t" style="left:1579.10px;top:130.96px;font-size:31px;color:#52607a;transform:scaleX(0.9980);transform-origin:0 0;">Calendar</div>
<div class="t" style="left:1881.53px;top:240.41px;font-size:32px;color:#1a1a1a;transform:scaleX(0.9803);transform-origin:0 0;">24 Apr, 2024</div>
<div class="t" style="left:2617.60px;top:240.50px;font-size:30px;color:#333333;transform:scaleX(1.0124);transform-origin:0 0;">View</div>
<div class="t" style="left:2720.86px;top:239.41px;font-size:30px;color:#222222;transform:scaleX(0.9360);transform-origin:0 0;">Day</div>
<div class="t" style="left:1249.14px;top:342.21px;font-size:32px;color:#2a2a2a;font-weight:700;transform:scaleX(0.9309);transform-origin:0 0;">Field Technician</div>
<div class="t" style="left:2673.81px;top:344.80px;font-size:28px;color:#52607a;transform:scaleX(0.9839);transform-origin:0 0;">Timezone: (GMT +05:30)</div>
<div class="t" style="left:1298.43px;top:431.18px;font-size:30.5px;color:#52607a;transform:scaleX(1.0270);transform-origin:0 0;">Filter</div>
<div class="t" style="left:1386.70px;top:431.18px;font-size:30.5px;color:#1c9f4b;transform:scaleX(0.9686);transform-origin:0 0;">All, Zylker, Asc</div>
<div class="t" style="left:1846.07px;top:462.72px;font-size:21px;color:#111111;transform:scaleX(0.9532);transform-origin:0 0;">12:30 AM</div>
<div class="t" style="left:2046.79px;top:462.72px;font-size:21px;color:#111111;transform:scaleX(0.9449);transform-origin:0 0;">01:00 AM</div>
<div class="t" style="left:2246.79px;top:462.72px;font-size:21px;color:#111111;transform:scaleX(0.9449);transform-origin:0 0;">01:30 AM</div>
<div class="t" style="left:2446.79px;top:462.72px;font-size:21px;color:#111111;transform:scaleX(0.9449);transform-origin:0 0;">02:00 AM</div>
<div class="t" style="left:2646.79px;top:462.72px;font-size:21px;color:#111111;transform:scaleX(0.9449);transform-origin:0 0;">02:30 AM</div>
<div class="t" style="left:2846.79px;top:462.72px;font-size:21px;color:#111111;transform:scaleX(0.9449);transform-origin:0 0;">03:00 AM</div>
<div class="t" style="left:1262.33px;top:508.93px;font-size:29.5px;color:#161616;transform:scaleX(1.0515);transform-origin:0 0;">Home Painting</div>
<div class="t" style="left:1263.17px;top:556.03px;font-size:29.5px;color:#52607a;letter-spacing:0.152px;transform:scaleX(1.0600);transform-origin:0 0;">Service Appointments :</div>
<div class="t" style="left:1263.47px;top:666.03px;font-size:29.5px;color:#161616;transform:scaleX(1.0501);transform-origin:0 0;">John Stillman</div>
<div class="t" style="left:1262.67px;top:713.33px;font-size:29.5px;color:#52607a;letter-spacing:0.184px;transform:scaleX(1.0600);transform-origin:0 0;">Service Appointments :</div>
<div class="t" style="left:1261.69px;top:824.03px;font-size:29.5px;color:#161616;transform:scaleX(1.0263);transform-origin:0 0;">Lilly Rush</div>
<div class="t" style="left:1262.67px;top:871.33px;font-size:29.5px;color:#52607a;letter-spacing:0.184px;transform:scaleX(1.0600);transform-origin:0 0;">Service Appointments :</div>
<div class="t" style="left:1261.71px;top:982.03px;font-size:29.5px;color:#161616;transform:scaleX(1.0185);transform-origin:0 0;">Nick Vera</div>
<div class="t" style="left:1262.67px;top:1029.33px;font-size:29.5px;color:#52607a;letter-spacing:0.184px;transform:scaleX(1.0600);transform-origin:0 0;">Service Appointments :</div>
<div class="t" style="left:1262.70px;top:1141.03px;font-size:29.5px;color:#161616;transform:scaleX(1.0386);transform-origin:0 0;">Scotty Valens</div>
<div class="t" style="left:1262.67px;top:1188.33px;font-size:29.5px;color:#52607a;letter-spacing:0.184px;transform:scaleX(1.0600);transform-origin:0 0;">Service Appointments :</div>
<div class="t" style="left:1264.00px;top:1299.03px;font-size:29.5px;color:#161616;transform:scaleX(1.0352);transform-origin:0 0;">Will Jeffries</div>
<div class="t" style="left:1262.67px;top:1346.33px;font-size:29.5px;color:#52607a;letter-spacing:0.184px;transform:scaleX(1.0600);transform-origin:0 0;">Service Appointments :</div>
<div class="t" style="left:1718.00px;top:680.31px;font-size:23.5px;color:#5e7a7a;transform:scaleX(0.8583);transform-origin:0 0;">Available in Crew Road Repair</div>
<div class="t" style="left:1716.47px;top:838.43px;font-size:23px;color:#111111;transform:scaleX(0.8717);transform-origin:0 0;">Leave</div>
<div class="t" style="left:1718.00px;top:1313.11px;font-size:23.5px;color:#5e7a7a;transform:scaleX(0.8758);transform-origin:0 0;">Available in Crew Home Painting</div></body></html>
